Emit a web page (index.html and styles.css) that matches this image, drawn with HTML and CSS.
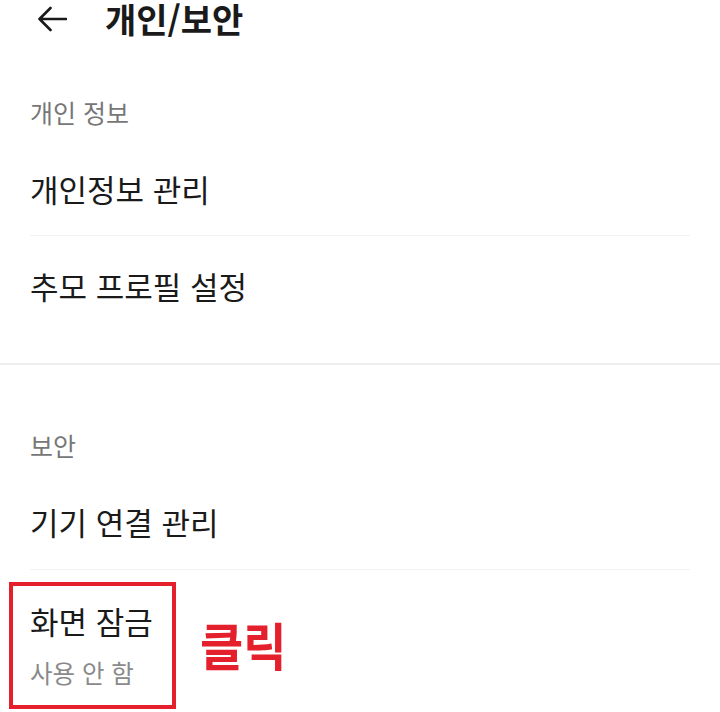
FILE: index.html
```html
<!DOCTYPE html>
<html lang="ko">
<head>
<meta charset="utf-8">
<link rel="stylesheet" href="styles.css">
</head>
<body>
<div class="page">
  <header class="header">
    <svg class="back" viewBox="0 0 30 26" width="30" height="26"><path d="M29 13 H2.5 M13.5 2 L2.5 13 L13.5 24" fill="none" stroke="#1a1a1a" stroke-width="2.6" stroke-linecap="round" stroke-linejoin="round"/></svg>
    <h1 class="title">개인/보안</h1>
  </header>

  <section class="section">
    <div class="section-label">개인 정보</div>
    <div class="item bordered"><span class="item-title">개인정보 관리</span></div>
    <div class="item item-last"><span class="item-title">추모 프로필 설정</span></div>
  </section>

  <div class="full-divider"></div>

  <section class="section section-second">
    <div class="section-label">보안</div>
    <div class="item bordered item-device"><span class="item-title">기기 연결 관리</span></div>
    <div class="item item-two">
      <span class="item-title">화면 잠금</span>
      <span class="item-sub">사용 안 함</span>
      <div class="highlight"></div>
      <div class="click-note">클릭</div>
    </div>
  </section>
</div>
</body>
</html>
```

FILE: styles.css
```css
html, body {
  margin: 0;
  padding: 0;
  background: #ffffff;
}
body {
  font-family: "Noto Sans CJK KR", "Noto Sans", sans-serif;
  color: #1a1a1a;
  overflow: hidden;
}
.page {
  width: 720px;
  height: 712px;
  overflow: hidden;
}
.header {
  height: 38px;
  display: flex;
  align-items: center;
  padding-left: 37px;
  gap: 38px;
}
.back {
  display: block;
}
.title {
  margin: 0;
  font-size: 34px;
  font-weight: 700;
  line-height: 38px;
  color: #1a1a1a;
}
.section {
  padding-top: 58px;
}
.section-second {
  padding-top: 64px;
}
.section-label {
  padding-left: 30px;
  font-size: 25px;
  line-height: 32px;
  color: #777777;
  margin-bottom: 11px;
}
.item {
  margin: 0 30px;
  padding: 30px 0 26px;
  display: flex;
  flex-direction: column;
}
.item.bordered {
  border-bottom: 1px solid #f2f2f2;
}
.item-last {
  padding-bottom: 28px;
}
.item-device {
  padding-bottom: 27px;
}
.item-title {
  font-size: 31px;
  line-height: 40px;
  color: #1a1a1a;
}
.item-two {
  position: relative;
  padding-top: 31px;
  padding-bottom: 20px;
  gap: 16px;
}
.item-sub {
  font-size: 24.5px;
  line-height: 32px;
  color: #8a8a8a;
}
.full-divider {
  height: 2px;
  background: #eeeeee;
  margin-top: 29px;
}
.highlight {
  position: absolute;
  left: -21px;
  top: 12px;
  width: 159px;
  height: 119px;
  border: 4px solid #e3202b;
}
.click-note {
  position: absolute;
  left: 170px;
  top: 41px;
  font-size: 47px;
  font-weight: 700;
  line-height: 60px;
  color: #e3202b;
  transform: scaleY(1.1);
  transform-origin: top left;
}
```
